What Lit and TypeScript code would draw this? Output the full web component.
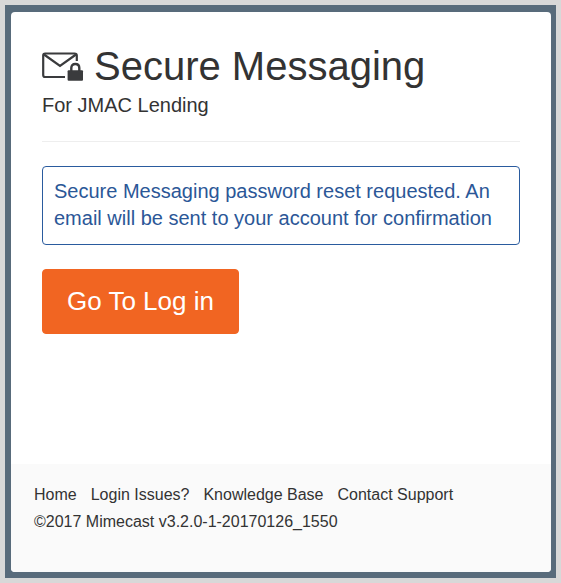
import { LitElement, html, css } from "lit";
import { customElement, property } from "lit/decorators.js";

@customElement("mail-lock-icon")
class MailLockIcon extends LitElement {
  static styles = css`
    :host {
      display: block;
      flex: none;
    }
    .icon {
      display: block;
      width: 42px;
      height: 30px;
    }
  `;

  render() {
    return html`
      <svg class="icon" viewBox="0 0 42 30" aria-hidden="true">
        <g fill="none" stroke="#3a3b3d" stroke-width="2.2">
          <path d="M23 26H3Q1.2 26 1.2 24V4.5Q1.2 2.5 3.2 2.5H32.5Q34.8 2.5 34.8 4.5V10" />
          <path d="M2 3.5L18 15L34 3.5" />
          <path d="M29.3 20V17Q29.3 13 33.3 13Q37.3 13 37.3 17V20" stroke-width="2.4" />
        </g>
        <rect x="25.6" y="19.2" width="15.4" height="10.6" rx="1" fill="#3a3b3d" />
      </svg>
    `;
  }
}

@customElement("page-footer")
class PageFooter extends LitElement {
  @property({ type: Array }) links: string[] = [];

  static styles = css`
    .footer {
      min-height: 108px;
      box-sizing: border-box;
      padding: 17px 23px;
      background: #fafafa;
      font-size: 16px;
      line-height: 27px;
    }
    .links {
      display: flex;
      flex-wrap: wrap;
      column-gap: 14px;
    }
    .link {
      color: inherit;
      text-decoration: none;
    }
    .legal {
      margin: 0;
    }
  `;

  render() {
    return html`
      <footer class="footer">
        <nav class="links" aria-label="Help">
          ${this.links.map((l) => html`<a class="link" href="#">${l}</a>`)}
        </nav>
        <p class="legal">©2017 Mimecast v3.2.0-1-20170126_1550</p>
      </footer>
    `;
  }
}

@customElement("app-root")
class AppRoot extends LitElement {
  private links = ["Home", "Login Issues?", "Knowledge Base", "Contact Support"];

  static styles = css`
    :host {
      display: flex;
      box-sizing: border-box;
      min-height: 100vh;
      padding: 5px;
      background: #d8d8d8;
      color: #333333;
      font-family: "Liberation Sans", Arial, sans-serif;
    }
    .frame {
      flex: 1;
      display: flex;
      padding: 7px 5px 6px 6px;
      background: #586b7b;
    }
    .card {
      flex: 1;
      display: flex;
      flex-direction: column;
      overflow: hidden;
      border-radius: 4px;
      background: #ffffff;
    }
    .content {
      flex: 1;
      padding: 30px 31px;
    }
    .heading {
      display: flex;
      align-items: center;
      gap: 10px;
    }
    .title {
      margin: 0;
      font-size: 40px;
      font-weight: 400;
      line-height: 48px;
    }
    .subtitle {
      margin: 0;
      padding-bottom: 20px;
      border-bottom: 1px solid #eeeeee;
      font-size: 20px;
      line-height: 31px;
    }
    .notice {
      margin: 24px 0;
      padding: 11px 11px 12px;
      border: 1px solid #2a5b9e;
      border-radius: 4px;
      color: #2b5797;
      font-size: 20px;
      line-height: 27px;
    }
    .login {
      padding: 16px 24px;
      border: 1px solid #f16522;
      border-radius: 4px;
      background: #f16522;
      color: #ffffff;
      font-family: inherit;
      font-size: 26px;
      line-height: 31px;
      cursor: pointer;
    }
  `;

  render() {
    return html`
      <div class="frame">
        <div class="card">
          <main class="content">
            <header class="heading">
              <mail-lock-icon></mail-lock-icon>
              <h1 class="title">Secure Messaging</h1>
            </header>
            <p class="subtitle">For JMAC Lending</p>
            <div class="notice" role="status">
              Secure Messaging password reset requested. An email will be sent
              to your account for confirmation
            </div>
            <button class="login" type="button">Go To Log in</button>
          </main>
          <page-footer .links=${this.links}></page-footer>
        </div>
      </div>
    `;
  }
}
